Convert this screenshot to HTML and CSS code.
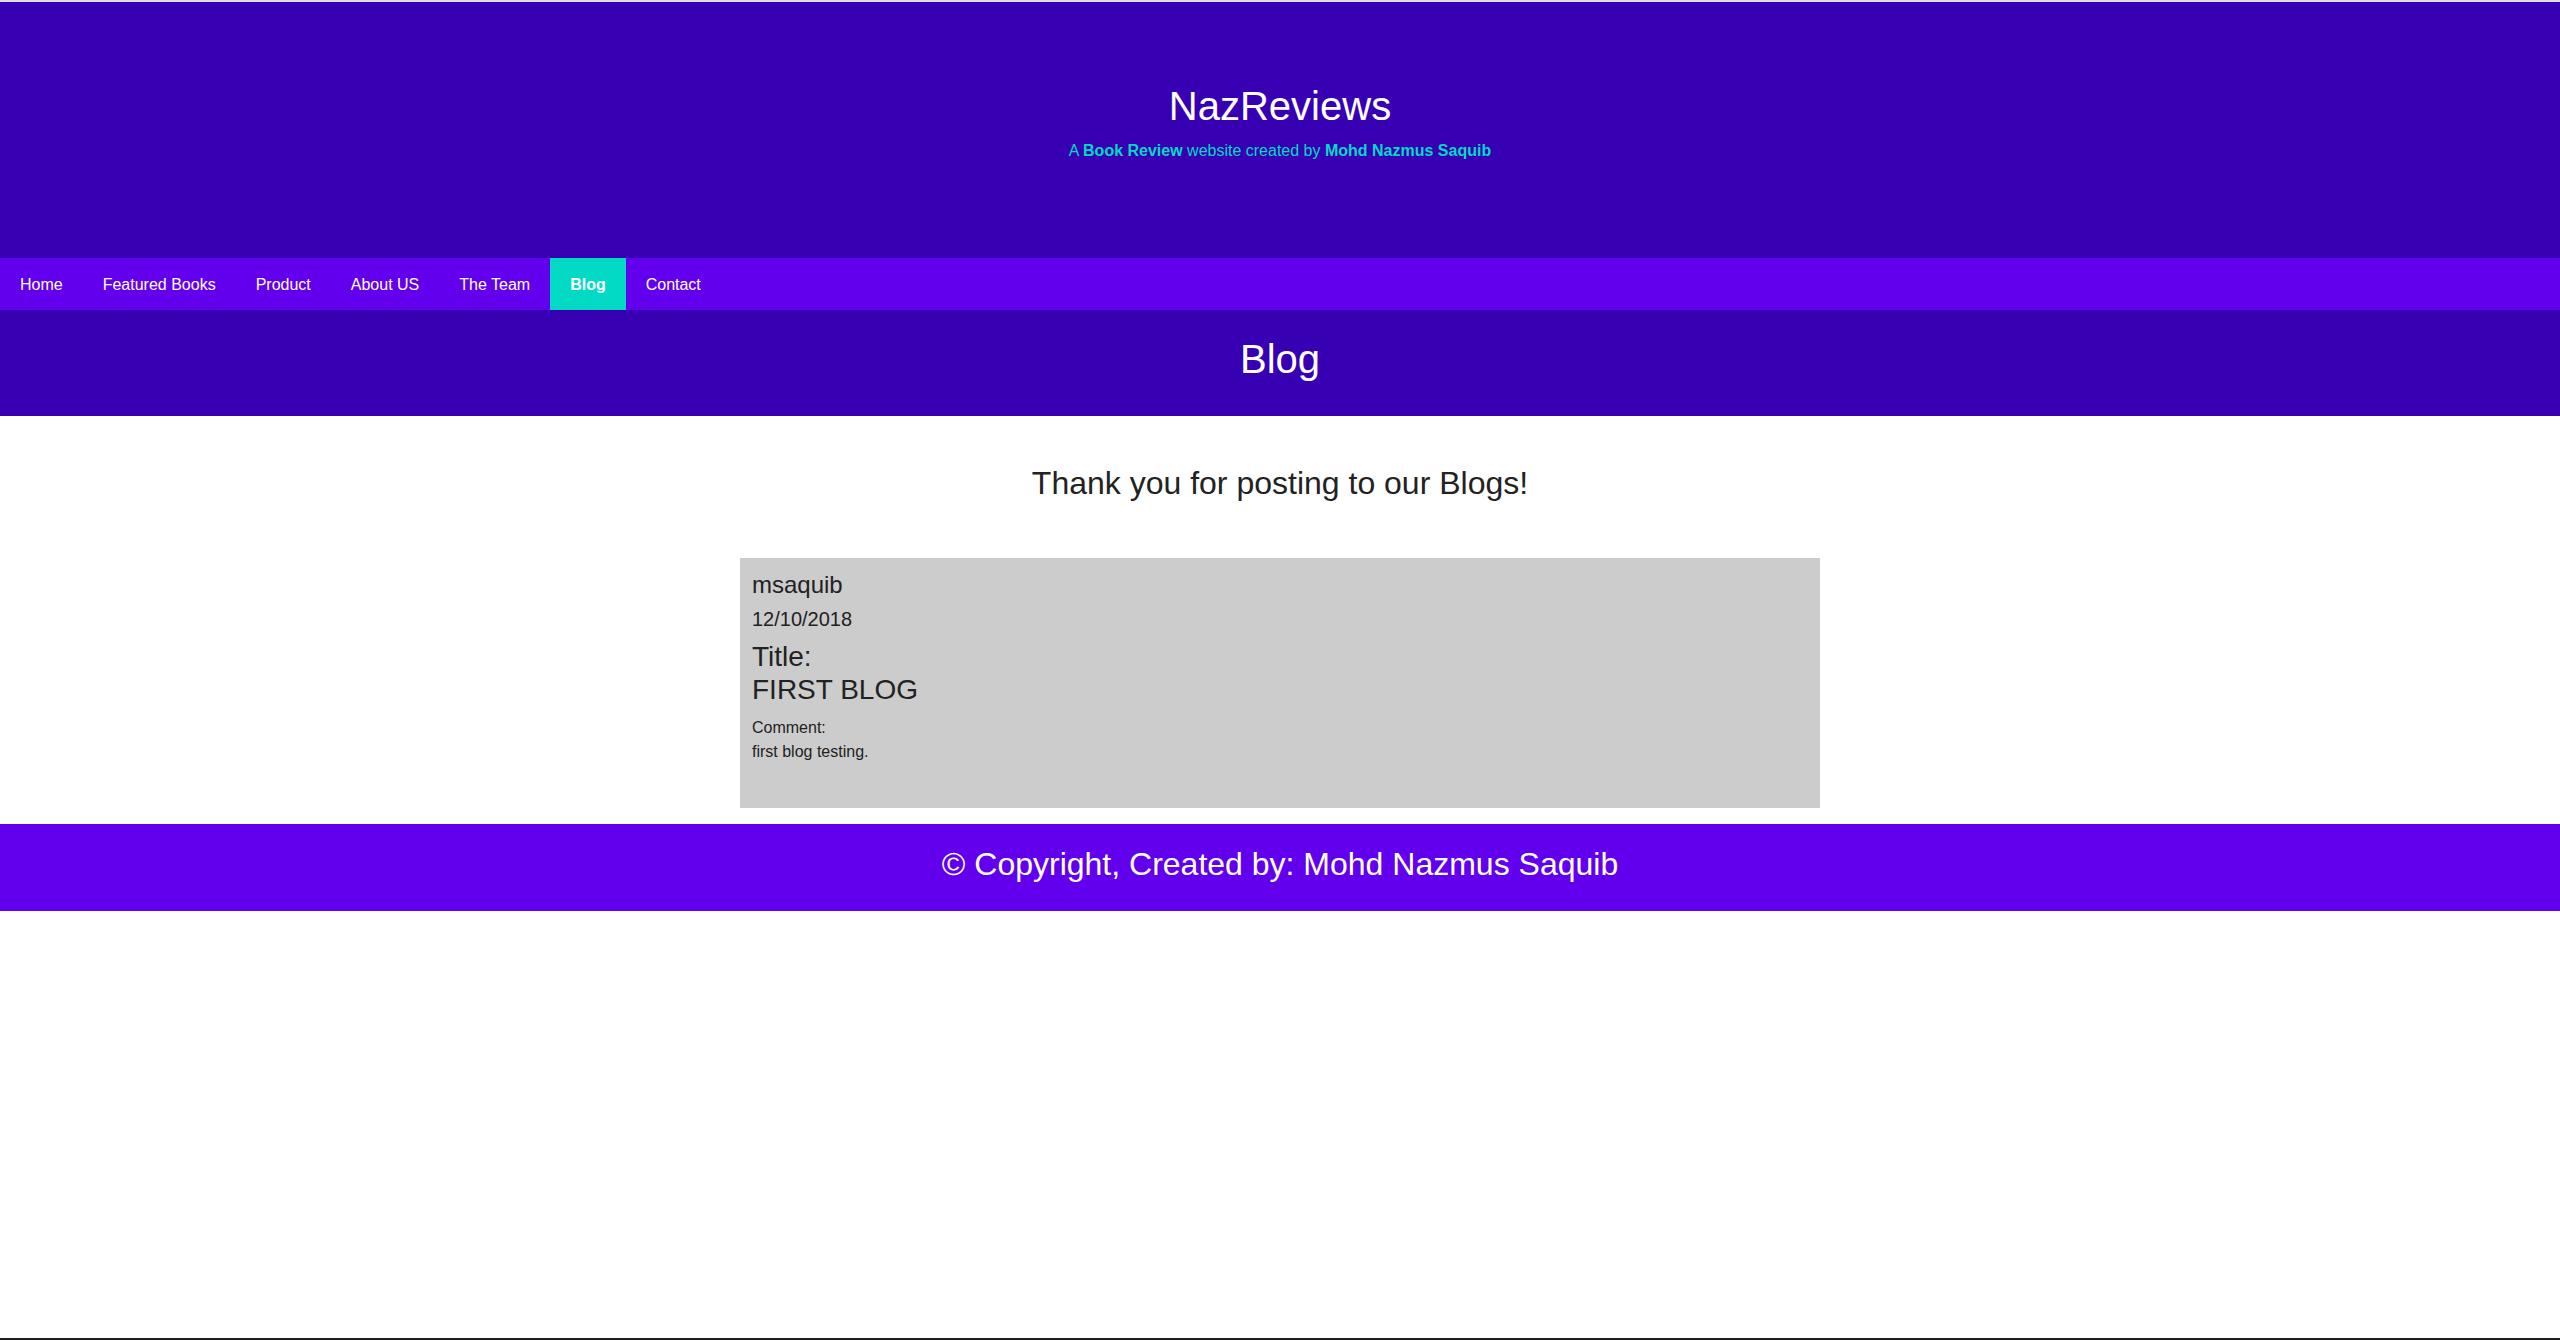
FILE: index.html
```html
<!DOCTYPE html>
<html lang="en">
<head>
<meta charset="utf-8">
<title>NazReviews - Blog</title>
<link rel="stylesheet" href="styles.css">
</head>
<body>
<div class="topline"></div>
<header class="site-header">
  <h1 class="site-title">NazReviews</h1>
  <p class="tagline">A <b>Book Review</b> website created by <b>Mohd Nazmus Saquib</b></p>
</header>
<nav class="nav">
  <a class="nav-link" href="#">Home</a>
  <a class="nav-link" href="#">Featured Books</a>
  <a class="nav-link" href="#">Product</a>
  <a class="nav-link" href="#">About US</a>
  <a class="nav-link" href="#">The Team</a>
  <a class="nav-link active" href="#">Blog</a>
  <a class="nav-link" href="#">Contact</a>
</nav>
<section class="page-band">
  <h2 class="page-title">Blog</h2>
</section>
<main class="content">
  <h3 class="thanks">Thank you for posting to our Blogs!</h3>
  <article class="post">
    <div class="post-user">msaquib</div>
    <div class="post-date">12/10/2018</div>
    <div class="post-title">Title:<br>FIRST BLOG</div>
    <div class="post-comment">Comment:<br>first blog testing.</div>
  </article>
</main>
<footer class="footer">© Copyright, Created by: Mohd Nazmus Saquib</footer>
<div class="bottombar"></div>
</body>
</html>
```
FILE: styles.css
```css
html, body {
  margin: 0;
  padding: 0;
  background: #ffffff;
  font-family: "Liberation Sans", Arial, sans-serif;
}

.topline {
  height: 2px;
  background: #dedede;
}

.site-header {
  box-sizing: border-box;
  height: 256px;
  padding-top: 81px;
  background: #3700b3;
  text-align: center;
}

.site-title {
  margin: 0;
  font-size: 40px;
  line-height: 46px;
  font-weight: normal;
  color: #ffffff;
}

.tagline {
  margin: 12px 0 0;
  font-size: 16px;
  line-height: 19px;
  color: #03dac6;
}

.tagline b {
  font-weight: bold;
}

.nav {
  display: flex;
  height: 52px;
  background: #6200ee;
}

.nav-link {
  display: flex;
  align-items: center;
  padding: 1px 20px 0;
  color: #ffffff;
  text-decoration: none;
  font-size: 16px;
}

.nav-link.active {
  background: #03dac6;
  font-weight: bold;
}

.page-band {
  box-sizing: border-box;
  height: 106px;
  padding-top: 26px;
  background: #3700b3;
  text-align: center;
}

.page-title {
  margin: 0;
  font-size: 40px;
  line-height: 46px;
  font-weight: normal;
  color: #ffffff;
}

.content {
  display: flex;
  flex-direction: column;
  align-items: center;
}

.thanks {
  margin: 49px 0 0;
  font-size: 32px;
  line-height: 37px;
  font-weight: normal;
  color: #222222;
}

.post {
  box-sizing: border-box;
  width: 1080px;
  height: 250px;
  margin-top: 56px;
  padding: 13px 12px;
  background: #cccccc;
  color: #222222;
}

.post-user {
  font-size: 24px;
  line-height: 28px;
}

.post-date {
  margin-top: 9px;
  font-size: 20px;
  line-height: 23px;
}

.post-title {
  margin-top: 9px;
  font-size: 28px;
  line-height: 33px;
}

.post-comment {
  margin-top: 10px;
  font-size: 16px;
  line-height: 24px;
}

.footer {
  box-sizing: border-box;
  height: 87px;
  margin-top: 16px;
  padding-top: 22px;
  background: #6200ee;
  color: #ffffff;
  text-align: center;
  font-size: 32px;
  line-height: 37px;
}

.bottombar {
  position: fixed;
  left: 0;
  right: 0;
  bottom: 0;
  height: 2px;
  background: #1f1f1f;
}
```
